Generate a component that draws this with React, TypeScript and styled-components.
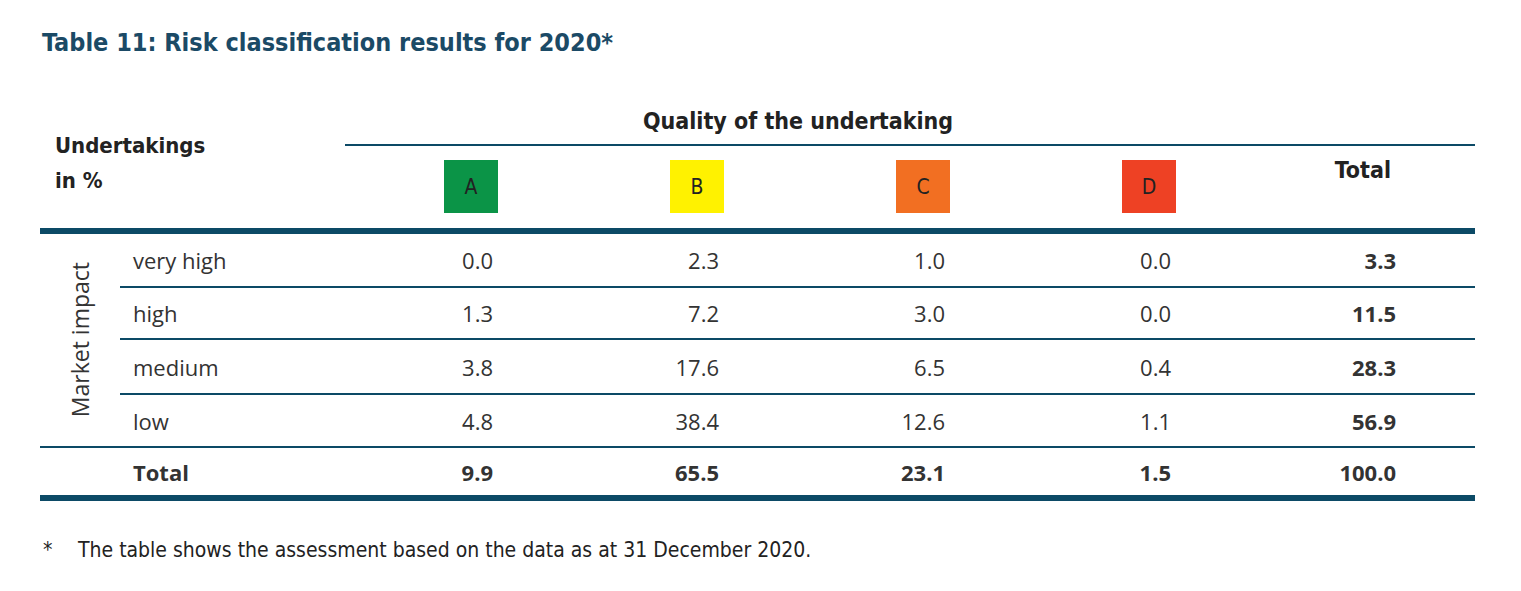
import React from 'react'
import styled, { createGlobalStyle } from 'styled-components'

const GlobalStyle = createGlobalStyle`
  html, body {
    margin: 0;
    padding: 0;
    background: #ffffff;
  }
`

const TEAL = '#0c4a66'
const NARROW = `"Liberation Sans Narrow", "DejaVu Sans Condensed", "Liberation Sans", sans-serif`
const BODY = `"Open Sans", "Noto Sans", sans-serif`
const COLS = '80px 152px repeat(4, 226px) 299px'

const Page = styled.div`
  width: 1521px;
  height: 591px;
  padding: 26px 0 0 40px;
  box-sizing: border-box;
  color: #333333;
  font-family: ${BODY};
`

const Title = styled.h1`
  margin: 0;
  font-family: ${NARROW};
  font-size: 25px;
  line-height: 34px;
  font-weight: 700;
  color: #1b4a66;
  padding-left: 2px;
`

const Header = styled.div`
  display: grid;
  grid-template-columns: ${COLS};
  grid-template-rows: 46px 82px;
  width: 1435px;
  margin-top: 40px;
  border-bottom: 6px solid ${TEAL};
  font-family: ${NARROW};
  font-weight: 700;
  font-size: 23px;
  color: #222222;
`

const CornerLabel = styled.div`
  grid-column: 1 / 3;
  grid-row: 1 / 3;
  padding: 28px 0 0 15px;
  font-size: 22px;
  line-height: 35px;
`

const Quality = styled.div`
  grid-column: 3 / -1;
  grid-row: 1;
  align-self: end;
  margin-left: 73px;
  padding: 0 0 9px 298px;
  line-height: 28px;
  border-bottom: 2px solid ${TEAL};
`

const GradeBox = styled.div<{ $bg: string }>`
  grid-row: 2;
  justify-self: end;
  align-self: start;
  width: 54px;
  height: 53px;
  margin-top: 14px;
  background: ${(p) => p.$bg};
  display: flex;
  align-items: center;
  justify-content: center;
  font-weight: 400;
  font-size: 21px;
  color: #222222;
`

const TotalHead = styled.div`
  grid-column: 7;
  grid-row: 2;
  justify-self: end;
  align-self: start;
  margin: 10px 84px 0 0;
  line-height: 28px;
`

const Body = styled.div`
  display: grid;
  grid-template-columns: ${COLS};
  grid-template-rows: 54px 52px 55px 53px 47px;
  width: 1435px;
  border-bottom: 6px solid ${TEAL};
  font-size: 22px;
`

const SideLabel = styled.div`
  grid-column: 1;
  grid-row: 1 / 5;
  display: flex;
  align-items: center;
  justify-content: center;
  border-bottom: 2px solid ${TEAL};
  font-size: 23px;
  span {
    writing-mode: vertical-rl;
    transform: rotate(180deg);
    white-space: nowrap;
  }
`

const Cell = styled.div<{ $rule?: boolean; $bold?: boolean; $pad?: number; $label?: boolean }>`
  display: flex;
  align-items: center;
  justify-content: ${(p) => (p.$label ? 'flex-start' : 'flex-end')};
  padding: ${(p) => (p.$label ? '0 0 0 13px' : `0 ${p.$pad ?? 5}px 0 0`)};
  border-bottom: ${(p) => (p.$rule ? `2px solid ${TEAL}` : 'none')};
  font-weight: ${(p) => (p.$bold ? 700 : 400)};
`

const Note = styled.div`
  display: flex;
  margin-top: 34px;
  padding-left: 3px;
  font-family: ${NARROW};
  font-size: 21px;
  line-height: 30px;
  color: #222222;
`

const Star = styled.span`
  width: 35px;
`

const grades = [
  { g: 'A', bg: '#0b9447' },
  { g: 'B', bg: '#fff200' },
  { g: 'C', bg: '#f26f22' },
  { g: 'D', bg: '#ee4124' },
]

const rows = [
  { label: 'very high', v: ['0.0', '2.3', '1.0', '0.0', '3.3'] },
  { label: 'high', v: ['1.3', '7.2', '3.0', '0.0', '11.5'] },
  { label: 'medium', v: ['3.8', '17.6', '6.5', '0.4', '28.3'] },
  { label: 'low', v: ['4.8', '38.4', '12.6', '1.1', '56.9'] },
]

const totals = ['9.9', '65.5', '23.1', '1.5', '100.0']

export default function App() {
  return (
    <Page>
      <GlobalStyle />
      <Title>Table 11: Risk classification results for 2020*</Title>

      <Header>
        <CornerLabel>
          Undertakings
          <br />
          in %
        </CornerLabel>
        <Quality>Quality of the undertaking</Quality>
        {grades.map((x, i) => (
          <GradeBox key={x.g} $bg={x.bg} style={{ gridColumn: i + 3 }}>
            {x.g}
          </GradeBox>
        ))}
        <TotalHead>Total</TotalHead>
      </Header>

      <Body>
        <SideLabel>
          <span>Market impact</span>
        </SideLabel>
        {rows.map((r) => (
          <React.Fragment key={r.label}>
            <Cell $label $rule style={{ gridColumn: 2 }}>
              {r.label}
            </Cell>
            {r.v.map((v, i) => (
              <Cell key={i} $rule $bold={i === 4} $pad={i === 4 ? 79 : 5}>
                {v}
              </Cell>
            ))}
          </React.Fragment>
        ))}
        <Cell $label $bold style={{ gridColumn: 2 }}>
          Total
        </Cell>
        {totals.map((v, i) => (
          <Cell key={i} $bold $pad={i === 4 ? 79 : 5}>
            {v}
          </Cell>
        ))}
      </Body>

      <Note>
        <Star>*</Star>
        <span>The table shows the assessment based on the data as at 31 December 2020.</span>
      </Note>
    </Page>
  )
}
